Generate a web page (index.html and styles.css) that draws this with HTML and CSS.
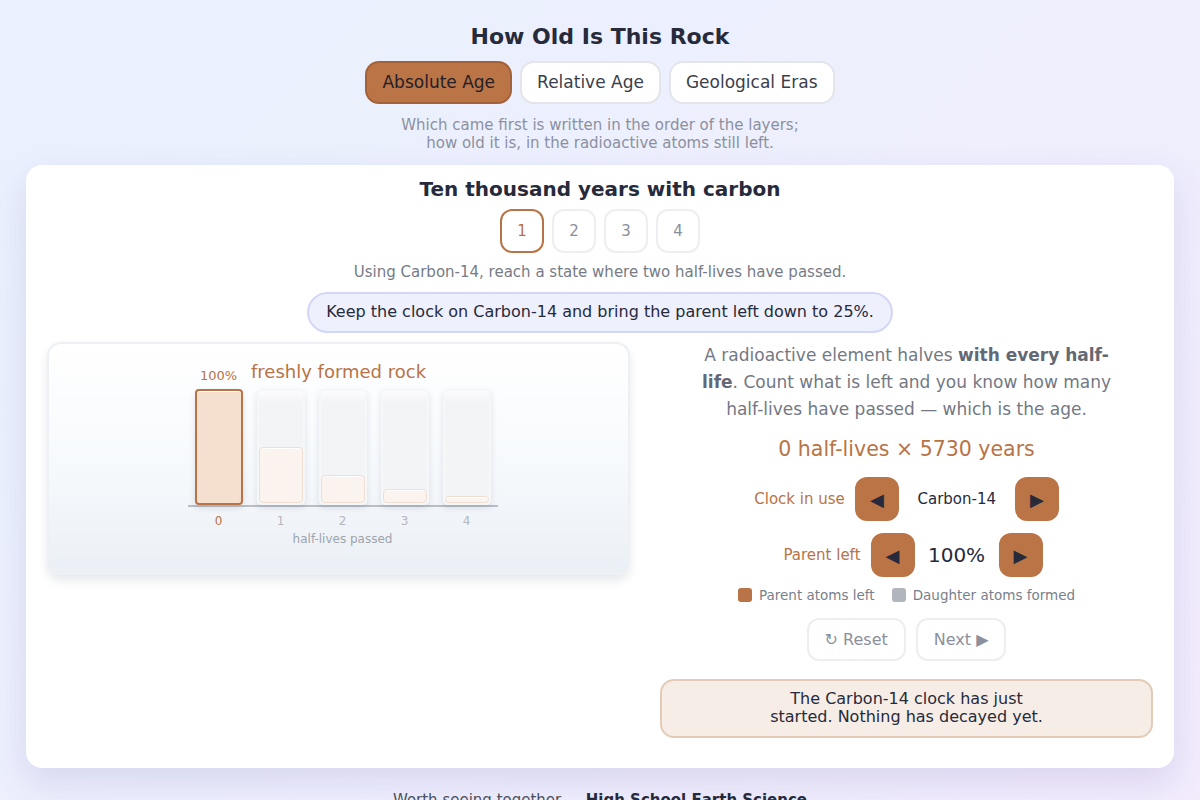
FILE: index.html
```html
<!DOCTYPE html>
<html lang="en">
<head>
<meta charset="utf-8">
<title>How Old Is This Rock</title>
<link rel="stylesheet" href="styles.css">
</head>
<body>
<div class="page">
  <h1 class="title">How Old Is This Rock</h1>
  <nav class="tabs">
    <button class="tab tab-active">Absolute Age</button>
    <button class="tab">Relative Age</button>
    <button class="tab">Geological Eras</button>
  </nav>
  <p class="subtitle">Which came first is written in the order of the layers;<br>how old it is, in the radioactive atoms still left.</p>

  <main class="card">
    <h2 class="card-title">Ten thousand years with carbon</h2>
    <div class="steps">
      <button class="step step-active">1</button>
      <button class="step">2</button>
      <button class="step">3</button>
      <button class="step">4</button>
    </div>
    <p class="instruction">Using Carbon-14, reach a state where two half-lives have passed.</p>
    <div class="hint">Keep the clock on Carbon-14 and bring the parent left down to 25%.</div>

    <div class="columns">
      <section class="chart-card">
        <div class="chart-caption">freshly formed rock</div>
        <div class="plot">
          <div class="bars">
            <div class="bar bar-active"><span class="bar-pct">100%</span><div class="fill" style="height:100%"></div></div>
            <div class="bar"><div class="fill" style="height:50%"></div></div>
            <div class="bar"><div class="fill" style="height:25%"></div></div>
            <div class="bar"><div class="fill" style="height:12.5%"></div></div>
            <div class="bar"><div class="fill" style="height:6.25%"></div></div>
          </div>
          <div class="axis">
            <span class="tick tick-active">0</span>
            <span class="tick">1</span>
            <span class="tick">2</span>
            <span class="tick">3</span>
            <span class="tick">4</span>
          </div>
          <div class="axis-title">half-lives passed</div>
        </div>
      </section>

      <section class="panel">
        <p class="explain">A radioactive element halves <b>with every half-life</b>. Count what is left and you know how many half-lives have passed — which is the age.</p>
        <div class="formula">0 half-lives × 5730 years</div>
        <div class="control">
          <span class="control-label">Clock in use</span>
          <button class="arrow">◀</button>
          <span class="value value-clock">Carbon-14</span>
          <button class="arrow">▶</button>
        </div>
        <div class="control">
          <span class="control-label">Parent left</span>
          <button class="arrow">◀</button>
          <span class="value value-pct">100%</span>
          <button class="arrow">▶</button>
        </div>
        <div class="legend">
          <span class="legend-item"><span class="swatch swatch-parent"></span>Parent atoms left</span>
          <span class="legend-item"><span class="swatch swatch-daughter"></span>Daughter atoms formed</span>
        </div>
        <div class="actions">
          <button class="action">↻ Reset</button>
          <button class="action">Next ▶</button>
        </div>
        <div class="feedback"><p class="feedback-text">The Carbon-14 clock has just started. Nothing has decayed yet.</p></div>
      </section>
    </div>
  </main>

  <footer class="footer">Worth seeing together — <b>High School Earth Science</b></footer>
</div>
</body>
</html>
```

FILE: styles.css
```css
* { box-sizing: border-box; }

html, body {
  margin: 0;
  padding: 0;
}

body {
  font-family: "DejaVu Sans", "Noto Sans", sans-serif;
  color: #262a3b;
  background: linear-gradient(135deg, #e9f1fe 0%, #eeeffd 50%, #f3ecfd 100%);
  min-height: 800px;
  overflow: hidden;
}

.page {
  padding: 23px 26px 0;
  display: flex;
  flex-direction: column;
  align-items: stretch;
}

.title {
  margin: 0;
  text-align: center;
  font-size: 22px;
  line-height: 28px;
  font-weight: 700;
  color: #262a3b;
}

.tabs {
  margin-top: 10px;
  display: flex;
  justify-content: center;
  gap: 8px;
}

.tab {
  font-family: inherit;
  font-size: 17px;
  line-height: 20px;
  padding: 9px 15px 10px;
  border-radius: 14px;
  border: 2px solid #e3e5ea;
  background: #fff;
  color: #3a3e4c;
}

.tab-active {
  background: #bb7445;
  border-color: #a4623a;
  color: #23202a;
}

.subtitle {
  margin: 12px 0 0;
  text-align: center;
  font-size: 15px;
  line-height: 18px;
  color: #8b90a0;
}

.card {
  margin-top: 13px;
  background: #fff;
  border-radius: 16px;
  box-shadow: 0 14px 34px rgba(96, 86, 170, 0.16);
  padding: 12px 21px 30px;
  display: flex;
  flex-direction: column;
}

.card-title {
  margin: 0;
  text-align: center;
  font-size: 20px;
  line-height: 24px;
  font-weight: 700;
  color: #262a3b;
}

.steps {
  margin-top: 8px;
  display: flex;
  justify-content: center;
  gap: 8px;
}

.step {
  width: 44px;
  height: 44px;
  border-radius: 12px;
  border: 2px solid #eceef1;
  background: #fff;
  font-family: inherit;
  font-size: 15px;
  color: #8b8f99;
  padding: 0;
}

.step-active {
  border-color: #b87346;
  color: #b87346;
}

.instruction {
  margin: 9px 0 0;
  text-align: center;
  font-size: 15px;
  line-height: 20px;
  color: #767b86;
}

.hint {
  margin: 10px auto 0;
  width: fit-content;
  padding: 9px 17px 10px;
  border-radius: 21px;
  background: #eef0fd;
  border: 2px solid #d3d6f6;
  font-size: 16px;
  line-height: 18px;
  color: #262a3b;
}

.columns {
  margin-top: 9px;
  display: grid;
  grid-template-columns: 1.183fr 1fr;
  gap: 30px;
  align-items: start;
}

/* chart */
.chart-card {
  border-radius: 14px;
  border: 2px solid #edf0f4;
  background: linear-gradient(180deg, #ffffff 0%, #f6f9fc 55%, #ebf0f6 100%);
  box-shadow: 0 6px 10px rgba(60, 70, 100, 0.12);
  padding: 17px 0 26px;
  display: flex;
  flex-direction: column;
  align-items: center;
}

.chart-caption {
  font-size: 18px;
  line-height: 22px;
  color: #b87346;
}

.plot {
  margin-top: 6px;
  margin-left: 8px;
  display: flex;
  flex-direction: column;
  align-items: center;
}

.bars {
  display: flex;
  align-items: flex-end;
  gap: 14px;
  padding: 0 7px;
  height: 118px;
  border-bottom: 2px solid #b9bec7;
}

.bar {
  position: relative;
  width: 48px;
  height: 116px;
  border-radius: 5px;
  background: linear-gradient(180deg, #fdfdfe 0%, #f3f4f6 10%, #f2f4f6 100%);
  border: 2px solid #f6f7f9;
  box-shadow: 0 3px 6px rgba(40, 50, 70, 0.12);
  display: flex;
  align-items: flex-end;
}

.fill {
  width: 100%;
  border-radius: 4px;
  background: #fbf4ee;
  border: 1px solid #efdfd2;
  box-shadow: inset 0 1px 0 #fff;
}

.bar-active {
  border: 0;
}

.bar-active .fill {
  background: #f5e0cf;
  border: 2px solid #b87346;
}

.bar-pct {
  position: absolute;
  left: 0;
  right: 0;
  bottom: 100%;
  margin-bottom: 5px;
  text-align: center;
  font-size: 13px;
  line-height: 16px;
  color: #b87346;
}

.axis {
  margin-top: 7px;
  display: flex;
  gap: 14px;
  padding: 0 7px;
}

.tick {
  width: 48px;
  text-align: center;
  font-size: 12px;
  line-height: 15px;
  color: #b3b7bf;
}

.tick-active {
  color: #b87346;
}

.axis-title {
  margin-top: 3px;
  font-size: 12px;
  line-height: 15px;
  color: #9ea3ab;
}

/* panel */
.panel {
  display: flex;
  flex-direction: column;
  align-items: center;
}

.explain {
  margin: 0;
  max-width: 414px;
  text-align: center;
  font-size: 17px;
  line-height: 27px;
  color: #737884;
}

.explain b {
  color: #636875;
}

.formula {
  margin-top: 12px;
  font-size: 20.5px;
  line-height: 28px;
  color: #b87346;
}

.control {
  display: flex;
  align-items: center;
  gap: 10px;
  margin-top: 14px;
}

.control + .control {
  margin-top: 12px;
}

.control-label {
  min-width: 90px;
  text-align: right;
  font-size: 15px;
  color: #b87346;
}

.arrow {
  width: 44px;
  height: 44px;
  border-radius: 12px;
  border: 0;
  background: #bb7445;
  color: #262a3b;
  font-family: inherit;
  font-size: 18px;
  padding: 0;
}

.value {
  text-align: center;
  color: #262a3b;
}

.value-clock {
  font-size: 15px;
  min-width: 96px;
}

.value-pct {
  font-size: 20px;
  min-width: 64px;
}

.legend {
  margin-top: 9px;
  display: flex;
  gap: 17px;
  font-size: 13.5px;
  line-height: 18px;
  color: #7a7f8b;
}

.legend-item {
  display: flex;
  align-items: center;
  gap: 7px;
}

.swatch {
  width: 14px;
  height: 14px;
  border-radius: 3px;
}

.swatch-parent { background: #b87346; }
.swatch-daughter { background: #b1b6bd; }

.actions {
  margin-top: 14px;
  display: flex;
  gap: 10px;
}

.action {
  height: 43px;
  padding: 0 16px;
  border-radius: 12px;
  border: 2px solid #eceef1;
  background: #fff;
  font-family: inherit;
  font-size: 16px;
  color: #8b909c;
}

.feedback {
  margin-top: 18px;
  align-self: stretch;
  border-radius: 14px;
  background: #f6ede6;
  border: 2px solid #e4cbb7;
  padding: 9px 16px 10px;
}

.feedback-text {
  margin: 0 auto;
  max-width: 290px;
  text-align: center;
  font-size: 16px;
  line-height: 18px;
  color: #262a3b;
}

.footer {
  margin-top: 23px;
  text-align: center;
  font-size: 15px;
  line-height: 18px;
  color: #4b5060;
}

.footer b {
  color: #262a3b;
}
```
